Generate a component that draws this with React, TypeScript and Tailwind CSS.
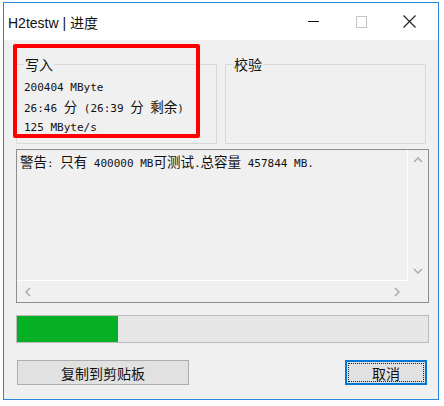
import React from "react";

const CJK = /([\u3000-\u9fff\uff00-\uffef]+)/;

// Bitmap-ish dialog font: ASCII in a narrow mono, CJK runs in a wider face
function Mixed({ text }: { text: string }) {
  return (
    <>
      {text.split(CJK).map((part, i) =>
        CJK.test(part) ? (
          <span key={i} className="text-[13.5px] font-['Noto_Sans_CJK_SC',sans-serif]">
            {part}
          </span>
        ) : (
          <span key={i}>{part}</span>
        )
      )}
    </>
  );
}

function Chevron({ dir }: { dir: "up" | "down" | "left" | "right" }) {
  const d = {
    up: "M1 6 L5 2 L9 6",
    down: "M1 2 L5 6 L9 2",
    left: "M6 1 L2 5 L6 9",
    right: "M3 1 L7 5 L3 9",
  }[dir];
  const w = dir === "up" || dir === "down" ? 10 : 9;
  const h = dir === "up" || dir === "down" ? 8 : 10;
  return (
    <svg width={w} height={h} viewBox={`0 0 ${w} ${h}`}>
      <path d={d} fill="none" stroke="#a8a8a8" strokeWidth="1.4" />
    </svg>
  );
}

function GroupBox({ label, children }: { label: string; children?: React.ReactNode }) {
  return (
    <fieldset className="w-[201px] h-[88px] border border-[#d9d9d9] px-[7px]">
      <legend className="px-[1px] text-[14px] leading-[16px] text-[#111] font-['Noto_Sans_CJK_SC',sans-serif]">
        {label}
      </legend>
      {children}
    </fieldset>
  );
}

export default function App() {
  return (
    <div className="w-[444px] h-[406px] bg-white pt-[2px] pl-[3px]">
      <div className="w-[436px] h-[398px] border border-[#2a86d8] flex flex-col">
        {/* title bar */}
        <div className="h-[37px] bg-white flex items-center">
          <span className="pl-[4px] pt-[3px] text-[14px] text-[#111] font-['Liberation_Sans','Noto_Sans_CJK_SC',sans-serif]">
            H2testw | 进度
          </span>
          <div className="ml-auto flex h-full pr-[5px]">
            <div className="w-[48px] flex items-center justify-center">
              <div className="w-[11px] h-[1px] bg-[#111]" />
            </div>
            <div className="w-[48px] flex items-center justify-center">
              <div className="w-[11px] h-[12px] border border-[#c4c4c4]" />
            </div>
            <div className="w-[48px] flex items-center justify-center">
              <svg width="13" height="13" viewBox="0 0 13 13">
                <path d="M0.5 0.5 L12.5 12.5 M12.5 0.5 L0.5 12.5" stroke="#222" strokeWidth="1.2" />
              </svg>
            </div>
          </div>
        </div>

        {/* client area */}
        <div className="relative flex-1 bg-[#f0f0f0] pl-[12px] pr-[9px] pt-[16px] flex flex-col">
          <div className="flex gap-[8px]">
            <GroupBox label="写入">
              <div className="pt-[6px] text-[11px] leading-[19px] text-[#111] font-['DejaVu_Sans_Mono','Noto_Sans_CJK_SC',monospace]">
                <div><Mixed text="200404 MByte" /></div>
                <div><Mixed text="26:46 分 (26:39 分 剩余)" /></div>
                <div><Mixed text="125 MByte/s" /></div>
              </div>
            </GroupBox>
            <GroupBox label="校验" />
          </div>

          {/* log box */}
          <div className="mt-[5px] h-[154px] border border-[#8e8e8e] grid grid-cols-[1fr_20px] grid-rows-[1fr_21px]">
            <div className="border-r border-b border-white pl-[3px] pt-[2px] text-[11px] leading-[19px] text-[#111] font-['DejaVu_Sans_Mono','Noto_Sans_CJK_SC',monospace]">
              <Mixed text="警告: 只有 400000 MB可测试.总容量 457844 MB." />
            </div>
            <div className="flex flex-col items-center justify-between py-[6px] pr-[1px]">
              <Chevron dir="up" />
              <Chevron dir="down" />
            </div>
            <div className="flex items-center justify-between px-[7px]">
              <Chevron dir="left" />
              <Chevron dir="right" />
            </div>
            <div />
          </div>

          {/* progress */}
          <div className="mt-[12px] h-[28px] border border-[#bcbcbc] bg-[#e6e6e6]">
            <div className="h-full w-[101px] bg-[#06b025]" />
          </div>

          {/* buttons */}
          <div className="mt-[17px] flex justify-between pl-[1px] pr-[2px] text-[14px] text-[#111] font-['Noto_Sans_CJK_SC',sans-serif]">
            <button className="w-[172px] h-[25px] bg-[#e1e1e1] border border-[#adadad] flex items-center justify-center leading-none">
              复制到剪贴板
            </button>
            <button className="w-[82px] h-[25px] bg-[#e1e1e1] border-2 border-[#0078d7] p-[1px]">
              <span className="h-full w-full border border-dotted border-[#222] flex items-center justify-center leading-none">
                取消
              </span>
            </button>
          </div>

          {/* annotation highlight */}
          <div className="absolute left-[9px] top-[4px] w-[187px] h-[94px] border-[4px] border-[#ff0000] rounded-[2px]" />
        </div>
      </div>
    </div>
  );
}
